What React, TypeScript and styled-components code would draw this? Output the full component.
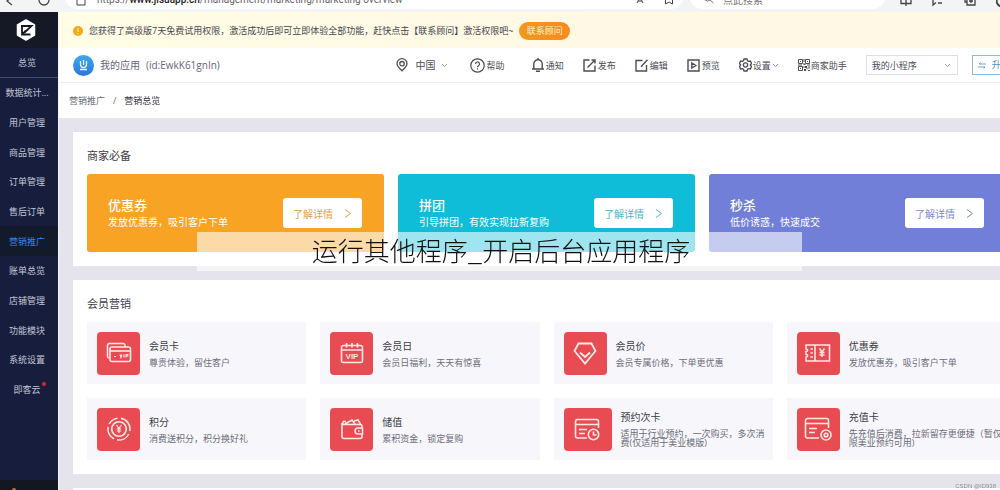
import React from "react";
import styled, { createGlobalStyle, css } from "styled-components";

const GlobalStyle = createGlobalStyle`
  * { box-sizing: border-box; }
  html, body, #root { height: 100%; }
  body {
    margin: 0;
    overflow: hidden;
    background: #e5e4ec;
    color: #45454f;
    font-family: "Open Sans", "Noto Sans CJK SC", sans-serif;
    font-size: 9px;
  }
  button, select { font: inherit; }
  h1, h2, h3, p, ul { margin: 0; padding: 0; font-weight: 400; }
  a { color: inherit; text-decoration: none; }
  svg { display: block; flex: none; }
`;

const Screen = styled.div`
  display: flex;
  flex-direction: column;
  height: 100%;
  overflow: hidden;
`;

const BrowserBar = styled.header`
  flex: none;
  display: flex;
  align-items: flex-end;
  height: 12px;
  padding: 0 0 3px;
  background: #f3f4f5;
  overflow: hidden;
  color: #444;
`;

const BrowserNav = styled.div`
  flex: none;
  display: flex;
  align-items: flex-end;
  gap: 24px;
  width: 64px;
  padding-left: 6px;
  height: 12px;
`;

const AddressPill = styled.div`
  flex: none;
  display: flex;
  align-items: flex-end;
  gap: 11px;
  width: 620px;
  height: 28px;
  padding: 0 10px 2px 12px;
  border-radius: 14px;
  background: #fff;
`;

const Url = styled.span`
  flex: 1;
  font-family: Roboto, sans-serif;
  font-size: 10px;
  line-height: 14px;
  color: #666;
  b { color: #222; font-weight: 500; }
`;

const AddressActions = styled.div`
  display: flex;
  align-items: flex-end;
  gap: 20px;
`;

const SearchPill = styled.div`
  flex: none;
  display: flex;
  align-items: flex-end;
  gap: 9px;
  width: 197px;
  height: 28px;
  margin-left: 5px;
  padding: 0 14px 3px;
  border-radius: 14px;
  background: #fff;
  font-size: 10px;
  line-height: 12px;
  color: #777;
`;

const BrowserTools = styled.div`
  display: flex;
  align-items: flex-end;
  gap: 20px;
  padding-left: 14px;
  height: 14px;
`;

const Body = styled.div`
  flex: 1;
  display: flex;
  min-height: 0;
  min-width: 1034px;
`;

const Sidebar = styled.nav`
  flex: none;
  display: flex;
  flex-direction: column;
  width: 59px;
  border-right: 1px solid #f4f4fa;
  background: #161d3d;
  color: #c3c7d6;
`;

const SideLogo = styled.div`
  display: flex;
  align-items: center;
  justify-content: center;
  height: 36px;
  padding-right: 6px;
  background: #151926;
`;

const SideList = styled.ul`
  display: grid;
  grid-auto-rows: 1fr;
  height: 356px;
  list-style: none;
`;

const SideItem = styled.li<{ $active?: boolean; $ruled?: boolean }>`
  display: flex;
  align-items: center;
  justify-content: center;
  padding: 2px 4px 0 0;
  white-space: nowrap;
  ${(p) => p.$ruled && css`border-bottom: 1px solid #454c69;`}
  ${(p) => p.$active && css`background: #131a29; color: #2f86e8;`}
`;

const SideLink = styled.a`
  position: relative;
  line-height: 14px;
`;

const RedDot = styled.i`
  position: absolute;
  top: -1px;
  right: -5px;
  width: 4px;
  height: 4px;
  border-radius: 50%;
  background: #e0203a;
`;

const SideFoot = styled.div`
  display: flex;
  align-items: flex-end;
  height: 10px;
  margin-top: auto;
  padding-left: 12px;
  background: #131722;
`;

const FootMark = styled.span`
  width: 4px;
  height: 2px;
  border-radius: 2px 2px 0 0;
  background: #d4683c;
`;

const Main = styled.main`
  flex: 1;
  min-width: 0;
`;

const Notice = styled.div`
  display: flex;
  align-items: center;
  gap: 6px;
  height: 36px;
  padding: 2px 14px 0;
  background: linear-gradient(90deg, #fffde6, #fff8e4 60%);
  line-height: 14px;
`;

const NoticeButton = styled.button`
  width: 51px;
  height: 18px;
  padding: 0;
  border: 0;
  border-radius: 9px;
  background: linear-gradient(90deg, #f0981e, #fb8a1c);
  color: #fff3c8;
  line-height: 18px;
`;

const TopBar = styled.div`
  display: flex;
  align-items: center;
  height: 35px;
  padding: 0 14px;
  border-bottom: 1px solid #eeeef2;
  background: #fff;
`;

const Brand = styled.div`
  flex: none;
  display: flex;
  align-items: center;
  gap: 6px;
  width: 323px;
  font-size: 10px;
  line-height: 16px;
  color: #66667a;
`;

const Tools = styled.div`
  display: flex;
  align-items: center;
  gap: 19px;
  white-space: nowrap;
`;

const ToolPair = styled.div`
  display: flex;
  align-items: center;
  gap: 22px;
  padding-right: 8px;
`;

const Tool = styled.button<{ $size?: number; $gap?: number }>`
  display: flex;
  align-items: center;
  gap: ${(p) => p.$gap ?? 2}px;
  padding: 0;
  border: 0;
  background: none;
  color: #4c4c55;
  font-size: ${(p) => p.$size ?? 9}px;
  line-height: 14px;
`;

const ToolLabel = styled.span`
  padding-top: 2px;
`;

const SelectBox = styled.label`
  display: flex;
  align-items: center;
  width: 92px;
  height: 20px;
  padding-right: 6px;
  border: 1px solid #dedee4;
`;

const Select = styled.select`
  flex: 1;
  min-width: 0;
  height: 18px;
  padding: 0 5px;
  border: 0;
  appearance: none;
  background: none;
  color: #4c4c55;
  font-size: 9px;
`;

const Upgrade = styled.button`
  display: flex;
  align-items: center;
  gap: 6px;
  height: 20px;
  margin-left: -5px;
  padding: 0 5px;
  border: 1px solid #8db9dc;
  background: #fff;
  color: #4a8fc8;
  line-height: 18px;
`;

const Crumbs = styled.nav`
  display: flex;
  align-items: center;
  gap: 8px;
  height: 35px;
  padding: 0 10px;
  background: #fff;
  color: #6c6c76;
  line-height: 14px;
`;

const CrumbCurrent = styled.span`
  color: #33333c;
`;

const Content = styled.div`
  display: flex;
  flex-direction: column;
  gap: 14px;
  padding: 14px;
`;

const Panel = styled.section`
  min-height: 14px;
  padding: 0 14px 14px;
  background: #fff;
`;

const PanelTitle = styled.h2`
  padding: 15px 0 9px;
  font-size: 11px;
  line-height: 18px;
  color: #3c3c46;
`;

const Grid = styled.div<{ $cols: number }>`
  display: grid;
  grid-template-columns: repeat(${(p) => p.$cols}, 1fr);
  gap: 14px;
`;

const Promo = styled.article<{ $color: string }>`
  display: flex;
  align-items: center;
  justify-content: space-between;
  height: 78px;
  padding: 0 22px 0 21px;
  border-radius: 3px;
  background: ${(p) => p.$color};
  color: #fff;
`;

const PromoTitle = styled.h3`
  font-size: 13px;
  font-weight: 500;
  line-height: 18px;
`;

const PromoText = styled.p`
  font-size: 10px;
  line-height: 16px;
`;

const PromoButton = styled.button<{ $color: string }>`
  display: flex;
  align-items: center;
  justify-content: space-between;
  width: 79px;
  height: 30px;
  padding: 0 10px;
  border: 0;
  border-radius: 3px;
  background: #fff;
  color: ${(p) => p.$color};
  font-size: 10px;
`;

const Tile = styled.article`
  display: flex;
  align-items: center;
  gap: 9px;
  height: 62px;
  padding-left: 10px;
  background: #f7f7fb;
  overflow: hidden;
`;

const TileIcon = styled.div<{ $wide?: boolean }>`
  flex: none;
  display: flex;
  align-items: center;
  justify-content: center;
  width: ${(p) => (p.$wide ? 48 : 43)}px;
  height: 43px;
  border-radius: 4px;
  background: #e84c52;
  color: #ffe9e6;
`;

const TileBody = styled.div`
  padding-bottom: 2px;
`;

const TileTitle = styled.h3`
  font-size: 10px;
  line-height: 16px;
  color: #3c3c46;
`;

const TileText = styled.p`
  margin-top: 4px;
  line-height: 9px;
  color: #6c6c7a;
  white-space: pre;
`;

const Caption = styled.div`
  position: fixed;
  top: 232px;
  left: 50%;
  width: 605px;
  max-width: 100%;
  height: 39px;
  margin-left: -303px;
  padding-left: 3px;
  background: rgba(255, 255, 255, 0.6);
  color: #111;
  font-family: "Noto Sans CJK SC", sans-serif;
  font-size: 26px;
  font-weight: 300;
  line-height: 36px;
  text-align: center;
  white-space: nowrap;
`;

const SourceMark = styled.div`
  position: fixed;
  right: 4px;
  bottom: 0;
  font-family: "Liberation Sans", sans-serif;
  font-size: 6px;
  line-height: 7px;
  color: #8c8c94;
`;

const FadedSvg = styled.svg`
  opacity: 0.6;
`;

const Line = ({ w, h, box, sw = 1, children }: { w: number; h: number; box: string; sw?: number; children: React.ReactNode }) => (
  <svg width={w} height={h} viewBox={box} fill="none" stroke="currentColor" strokeWidth={sw} aria-hidden="true">{children}</svg>
);

const Chevron = () => (
  <FadedSvg width="7" height="5" viewBox="0 0 7 5" fill="none" stroke="currentColor" strokeWidth="0.9" aria-hidden="true">
    <path d="M1 1l2.500 2.500L6 1" />
  </FadedSvg>
);

const icons = {
  pin: <Line w={12} h={14} box="0 0 12 14" sw={1.3}><path d="M6 12.800C3 10 1 8 1 5.700a5 5 0 0 1 10 0C11 8 9 10 6 12.800z" /><circle cx="6" cy="5.700" r="2.200" /></Line>,
  help: <Line w={15} h={15} box="0 0 15 15" sw={1.2}><circle cx="7.500" cy="7.500" r="6.700" /><path d="M5.500 6a2 2 0 1 1 3 1.700c-.8.500-1 .8-1 1.500M7.500 10.300v1.200" /></Line>,
  bell: <Line w={12} h={14} box="0 0 12 14" sw={1.4}><path d="M0 11h12M1.800 11V6a4.200 4.200 0 0 1 8.400 0v5M6 0v2M4 13.200h4" /></Line>,
  publish: <Line w={13} h={13} box="0 0 13 13" sw={1.4}><path d="M6.500 1H1v11h11V6.500M8.500 1H12v3.500M12 1L4.500 8.500" /></Line>,
  edit: <Line w={13} h={13} box="0 0 13 13" sw={1.4}><path d="M7.500 1.500H1V12h10.500V6M12.500 .8L6 7.800" /></Line>,
  preview: <Line w={13} h={13} box="0 0 13 13" sw={1.4}><path d="M1 1h11v11H1zM4.800 4v5l4-2.500z" /></Line>,
  gear: <Line w={13} h={14} box="0 0 13 14" sw={1.3}><path d="M5 1h3l.5 1.700 1.200.7 1.700-.4L12.500 5.500 11.300 7l1.200 1.500-1.100 2.500-1.700-.4-1.200.7L8 13H5l-.5-1.700-1.200-.7-1.700.4L.5 8.500 1.700 7 .5 5.500 1.600 3l1.700.4 1.200-.7z" /><circle cx="6.500" cy="7" r="2.100" /></Line>,
  qr: <Line w={12} h={12} box="0 0 12 12" sw={1}><path d="M.5.500h4v4h-4zM7.500.500h4v4h-4zM.5 7.500h4v4h-4zM2 2.500h1M9 2.500h1M2 9.500h1M6 0v3M5.500 4.500h1M5.500 5.500h2M9 6h3M6 7v2M7 7.500h2M7 8.500h2v2M11 7v3M6 10.500h2M6 11.500h2M10 11.500h2M0 6h4" /></Line>,
  swap: <Line w={8} h={7} box="0 0 8 7" sw={0.8}><path d="M8 2H1l1.500-1.500M0 5h7L5.500 6.500" /></Line>,
};

const tileIcons = {
  cards: <Line w={26} h={22} box="0 0 26 22" sw={1.6}><path d="M3.500 16A2 2 0 0 1 1.500 14V3.500a2 2 0 0 1 2-2H17a2 2 0 0 1 2 2V5" /><rect x="4" y="5" width="20.500" height="14.500" rx="2" /><path d="M4 9h20.500" /><path strokeWidth="1.100" d="M8 14.500h2M14 12.500l1 3 1-3M18 12.500v3M20 15.500v-3h1.800v1.500H20" /></Line>,
  calendar: <Line w={24} h={22} box="0 0 24 22" sw={1.6}><rect x="1.500" y="3.500" width="21" height="17" rx="2" /><path d="M1.500 8h21M6.500 1v4.500M12 1v4.500M17.500 1v4.500" /><text x="12" y="17" textAnchor="middle" fontSize="8" fontWeight="700" fontFamily="Liberation Sans, sans-serif" fill="currentColor" stroke="none">VIP</text></Line>,
  gem: <Line w={24} h={23} box="0 0 24 23" sw={1.8}><path d="M5.500 1.500h13L22.500 9 12 21.500 1.500 9zM7 10.500l5 4.500 5-4.500" /></Line>,
  ticket: <Line w={26} h={18} box="0 0 26 18" sw={1.5}><path d="M1 1h23.500v16H1v-4c2.200 0 2.200-2.500 0-2.500v-3C3.200 7.500 3.200 5 1 5zM10 1v16M5.500 5H8M5.500 9H8M5.500 13H8M14.500 4.500L17 8l2.500-3.500M17 8v5M14.500 8.500h5M14.500 11h5" /></Line>,
  points: <Line w={24} h={24} box="0 0 24 24" sw={1.6}><path d="M14 1.200A11 11 0 0 1 22.800 14M21.800 17A11 11 0 0 1 10 22.800M7 21.800A11 11 0 0 1 1.200 10M2.200 7A11 11 0 0 1 10.500 1.200" /><circle cx="12" cy="12" r="7.300" /><path strokeWidth="1.200" d="M9.500 8L12 11.500 14.500 8M12 11.500V16M9.800 12h4.400M9.800 14h4.400" /></Line>,
  wallet: <Line w={24} h={22} box="0 0 24 22" sw={1.6}><path d="M22 10V8.500a2 2 0 0 0-2-2H3.500a2 2 0 0 1 0-3H6M2 5v13.500A2 2 0 0 0 4 20.500h16a2 2 0 0 0 2-2V16M5 6l7-4 3 4M14 3l4-1 2.500 4" /><path d="M22.500 10H18a3 3 0 0 0 0 6h4.500zM18 13h1.500" /></Line>,
  times: <Line w={27} h={23} box="0 0 27 23" sw={1.6}><path d="M13 20H3.500a2 2 0 0 1-2-2V3.500a2 2 0 0 1 2-2h19a2 2 0 0 1 2 2V10M1.500 6.500h23M5 11.500h8M5 15.500h6" /><circle cx="19.500" cy="16.500" r="5.200" /><path d="M19.500 13.500v3.500h3" /></Line>,
  recharge: <Line w={28} h={24} box="0 0 28 24" sw={1.6}><path d="M15 21H3.500a2 2 0 0 1-2-2V3.500a2 2 0 0 1 2-2h19a2 2 0 0 1 2 2V11M1.500 6.500h23M5 11.500h8M5 15.500h6" /><circle cx="22" cy="18" r="5" /><circle cx="22" cy="18" r="1.800" /></Line>,
};

const sideItems = ["总览", "数据统计...", "用户管理", "商品管理", "订单管理", "售后订单", "营销推广", "账单总览", "店铺管理", "功能模块", "系统设置", "即客云"];

const promos = [
  { title: "优惠券", text: "发放优惠券，吸引客户下单", color: "#f8a324", ink: "#e0a048" },
  { title: "拼团", text: "引导拼团，有效实现拉新复购", color: "#0fbdd8", ink: "#4cb4c8" },
  { title: "秒杀", text: "低价诱惑，快速成交", color: "#717fd8", ink: "#7f88c8" },
];

const tiles: { icon: keyof typeof tileIcons; title: string; text: string; wide?: boolean }[] = [
  { icon: "cards", title: "会员卡", text: "尊贵体验，留住客户" },
  { icon: "calendar", title: "会员日", text: "会员日福利，天天有惊喜" },
  { icon: "gem", title: "会员价", text: "会员专属价格，下单更优惠" },
  { icon: "ticket", title: "优惠券", text: "发放优惠券，吸引客户下单" },
  { icon: "points", title: "积分", text: "消费送积分，积分换好礼" },
  { icon: "wallet", title: "储值", text: "累积资金，锁定复购" },
  { icon: "times", title: "预约次卡", text: "适用于行业预约，一次购买，多次消\n费(仅适用于美业模版)", wide: true },
  { icon: "recharge", title: "充值卡", text: "先充值后消费，拉新留存更便捷（暂仅\n限美业预约可用)" },
];

export default function App() {
  return (
    <Screen>
      <GlobalStyle />
      <BrowserBar>
        <BrowserNav>
          <Line w={8} h={12} box="0 0 8 12" sw={1.3}><path d="M6 0L1 4l5 4" /></Line>
          <Line w={12} h={12} box="0 0 12 12" sw={1.3}><path d="M1 3a5 5 0 0 0 10 0" /></Line>
        </BrowserNav>
        <AddressPill>
          <Line w={10} h={10} box="0 0 10 10"><path d="M1 1h8v7H1z" /></Line>
          <Url>https://<b>www.jisuapp.cn</b>/management/marketing/marketing-overview</Url>
          <AddressActions>
            <Line w={8} h={10} box="0 0 8 10"><path d="M1 6l3-6 3 6M2 4h4" /></Line>
            <Line w={10} h={10} box="0 0 10 10"><path d="M1.500 0v7L5 5l3.500 2V0" /></Line>
          </AddressActions>
        </AddressPill>
        <SearchPill>
          <Line w={11} h={10} box="0 0 11 10"><circle cx="4.500" cy="2" r="3" /><path d="M7 4l3.500 3" /></Line>
          点此搜索
        </SearchPill>
        <BrowserTools>
          <Line w={12} h={12} box="0 0 12 12" sw={1.3}><path d="M1 0v6.500h10V0M6 0v9" /></Line>
          <Line w={12} h={12} box="0 0 12 12" sw={1.3}><path d="M1 0v8l3-2.500M6 6h4" /></Line>
          <Line w={12} h={12} box="0 0 12 12" sw={1.3}><path d="M1 0v5h2M3 1h8v7H3zM7 1v5M5 4h4" /></Line>
          <Line w={12} h={12} box="0 0 12 12" sw={2}><path d="M1 2a5 5 0 0 0 10 4" /></Line>
        </BrowserTools>
      </BrowserBar>
      <Body>
        <Sidebar>
          <SideLogo>
            <svg width="20" height="22" viewBox="0 0 20 22" aria-hidden="true">
              <path d="M10 1l8.500 5v10L10 21l-8.500-5V6z" fill="#fff" stroke="#fff" strokeWidth="1.500" strokeLinejoin="round" />
              <path d="M5 7H15.500L8.500 13.500M6 6.500V15.500H14.500M6 15.500l4-4" fill="none" stroke="#151926" strokeWidth="1.800" />
            </svg>
          </SideLogo>
          <SideList>
            {sideItems.map((label, i) => (
              <SideItem key={label} $active={i === 6} $ruled={i === 0}>
                <SideLink href="#">{label}{i === 11 && <RedDot />}</SideLink>
              </SideItem>
            ))}
          </SideList>
          <SideFoot><FootMark /></SideFoot>
        </Sidebar>
        <Main>
          <Notice>
            <svg width="10" height="10" viewBox="0 0 10 10" aria-hidden="true"><circle cx="5" cy="5" r="5" fill="#f5a81c" /><path d="M5 2v4M5 7v1" stroke="#fff0b8" /></svg>
            <span>您获得了高级版7天免费试用权限，激活成功后即可立即体验全部功能，赶快点击【联系顾问】激活权限吧~</span>
            <NoticeButton type="button">联系顾问</NoticeButton>
          </Notice>
          <TopBar>
            <Brand>
              <svg width="21" height="21" viewBox="0 0 21 21" aria-hidden="true">
                <defs><linearGradient id="brand" x1="0" y1="0" x2="0" y2="1"><stop offset="0" stopColor="#3fa8ea" /><stop offset="1" stopColor="#2a78dc" /></linearGradient></defs>
                <circle cx="10.500" cy="10.500" r="10.500" fill="url(#brand)" />
                <path d="M7.500 6v3.500a3 3 0 0 0 6 0V6M10.500 5v5M7 14.500h7" fill="none" stroke="#e8f6ff" strokeWidth="1.300" />
              </svg>
              <span>我的应用</span>
              <span>(id:EwkK61gnIn)</span>
            </Brand>
            <Tools>
              <ToolPair>
                <Tool type="button" $size={10} $gap={5}>{icons.pin}<span>&nbsp;中国</span><Chevron /></Tool>
                <Tool type="button">{icons.help}<ToolLabel>帮助</ToolLabel></Tool>
              </ToolPair>
              <Tool type="button">{icons.bell}<ToolLabel>通知</ToolLabel></Tool>
              <Tool type="button">{icons.publish}<ToolLabel>发布</ToolLabel></Tool>
              <Tool type="button">{icons.edit}<ToolLabel>编辑</ToolLabel></Tool>
              <Tool type="button">{icons.preview}<ToolLabel>预览</ToolLabel></Tool>
              <Tool type="button" $gap={1}>{icons.gear}<ToolLabel>设置</ToolLabel><Chevron /></Tool>
              <Tool type="button" $gap={1}>{icons.qr}<ToolLabel>商家助手</ToolLabel></Tool>
              <SelectBox>
                <Select aria-label="小程序" defaultValue="mini"><option value="mini">我的小程序</option></Select>
                <Chevron />
              </SelectBox>
              <Upgrade type="button">{icons.swap}升级</Upgrade>
            </Tools>
          </TopBar>
          <Crumbs>
            <a href="#">营销推广</a><span>/</span><CrumbCurrent>营销总览</CrumbCurrent>
          </Crumbs>
          <Content>
            <Panel>
              <PanelTitle>商家必备</PanelTitle>
              <Grid $cols={3}>
                {promos.map((p) => (
                  <Promo key={p.title} $color={p.color}>
                    <div><PromoTitle>{p.title}</PromoTitle><PromoText>{p.text}</PromoText></div>
                    <PromoButton type="button" $color={p.ink}>
                      了解详情
                      <Line w={8} h={9} box="0 0 8 9"><path d="M1 .5l5.500 4L1 8.500" /></Line>
                    </PromoButton>
                  </Promo>
                ))}
              </Grid>
            </Panel>
            <Panel>
              <PanelTitle>会员营销</PanelTitle>
              <Grid $cols={4}>
                {tiles.map((t) => (
                  <Tile key={t.icon}>
                    <TileIcon $wide={t.wide}>{tileIcons[t.icon]}</TileIcon>
                    <TileBody><TileTitle>{t.title}</TileTitle><TileText>{t.text}</TileText></TileBody>
                  </Tile>
                ))}
              </Grid>
            </Panel>
            <Panel />
          </Content>
        </Main>
      </Body>
      <Caption>运行其他程序_开启后台应用程序</Caption>
      <SourceMark>CSDN @ID938</SourceMark>
    </Screen>
  );
}
